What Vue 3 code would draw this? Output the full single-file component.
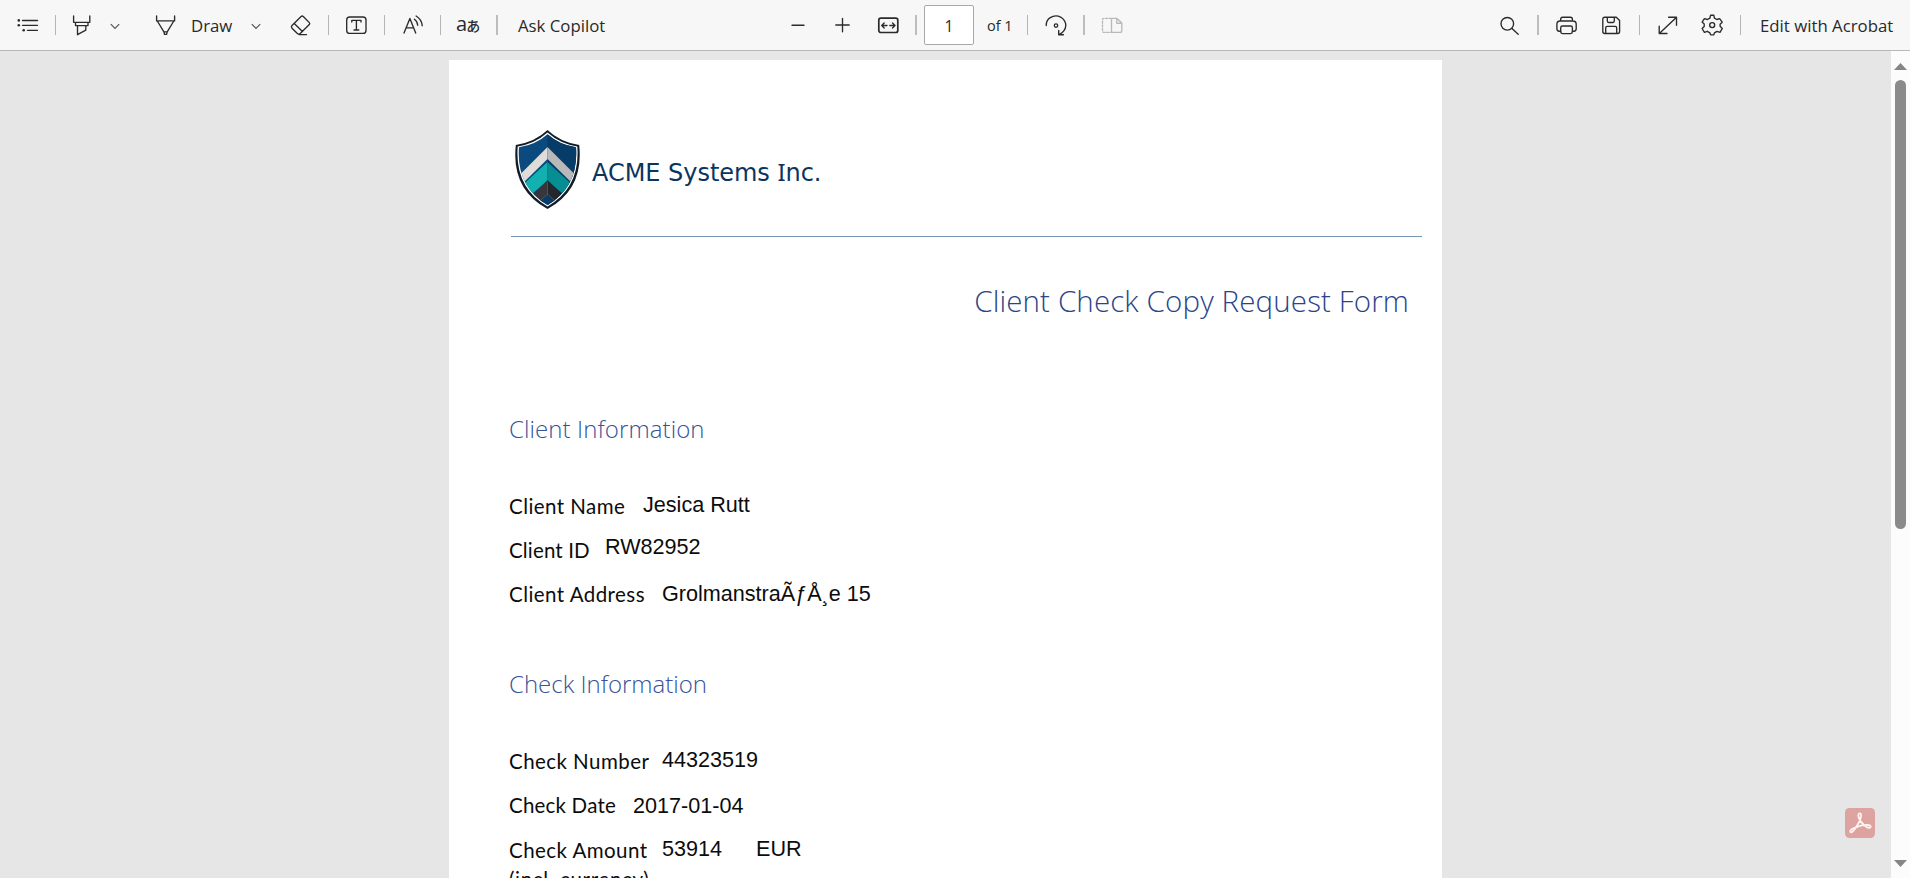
<script setup>
const clientRows = [
  { key: 'name', label: 'Client Name', value: 'Jesica Rutt' },
  { key: 'id', label: 'Client ID', value: 'RW82952' },
  { key: 'address', label: 'Client Address', value: 'GrolmanstraÃƒÅ¸e 15' },
]
const checkRows = [
  { key: 'number', label: 'Check Number', value: '44323519' },
  { key: 'date', label: 'Check Date', value: '2017-01-04' },
  { key: 'amount', label: 'Check Amount', value: '53914', extra: 'EUR' },
]
</script>

<template>
  <div class="viewer">
    <header class="toolbar">
      <svg class="icon" viewBox="0 0 24 24"><path d="M6.5 7.5H21.5M6.5 12.3H21.5M11.5 17.3H21.5" /><g class="solid"><circle cx="2.8" cy="7.4" r="1.3" /><circle cx="2.8" cy="12.2" r="1.3" /><circle cx="7.7" cy="17.2" r="1.3" /></g></svg>
      <i class="sep s1"></i>
      <svg class="icon i-high" viewBox="0 0 24 24"><path d="M3.6 3V9.3H19.8V3M5.5 9.5V12.6H18V9.5M7.5 12.8V21.7L15.8 17.2V12.8" /></svg>
      <svg class="chev c1" viewBox="0 0 12 12"><path d="M1.8 4.2L6 8.4L10.2 4.2" /></svg>
      <svg class="icon i-draw" viewBox="0 0 24 24"><path d="M3.6 3V7.9H21.6V3M4.3 8L10.9 18.8H14.2L20.8 8M10.9 18.8L11.5 21.4H13.6L14.2 18.8" /></svg>
      <span class="txt t-draw">Draw</span>
      <svg class="chev c2" viewBox="0 0 12 12"><path d="M1.8 4.2L6 8.4L10.2 4.2" /></svg>
      <svg class="icon i-erase" viewBox="0 0 24 24"><path d="M15.3 3.5L21.3 9.6Q22.2 10.6 21.3 11.6L12.5 20.3Q10.8 21.9 9.1 20.3L4 15.2Q2.7 13.8 4 12.5L13.1 3.5Q14.2 2.5 15.3 3.5ZM6.2 10.4L14.5 18.6M11 21.6H18.5" /></svg>
      <i class="sep s2"></i>
      <svg class="icon i-text" viewBox="0 0 24 24"><rect x="2.7" y="4" width="19.3" height="16.4" rx="3" /><path d="M7.8 9V7.3H17V9M12.4 7.3V17M10 17H14.8" /></svg>
      <i class="sep s3"></i>
      <svg class="icon i-read" viewBox="0 0 24 24"><path d="M3 20L8.9 5.5L14.7 20M5.2 14.8H12.6M13.4 6.2Q16.4 8.2 16.7 12.2M15.1 3Q20.6 6.2 21.2 12.7" /></svg>
      <i class="sep s4"></i>
      <span class="translate"><span class="latin">a</span><span class="kana">あ</span></span>
      <i class="sep wide s5"></i>
      <span class="txt t-ask">Ask Copilot</span>

      <svg class="icon i-minus" viewBox="0 0 24 24"><path d="M6 12.2H18" /></svg>
      <svg class="icon i-plus" viewBox="0 0 24 24"><path d="M12.5 5.3V18.7M5.8 12H19.2" /></svg>
      <svg class="icon i-fit" viewBox="0 0 24 24"><rect class="bold" x="2.8" y="5.2" width="19" height="14.3" rx="2" /><path d="M6 12.5H11M8.2 10L5.7 12.5L8.2 15M13.8 12.5H18.8M16.5 10L19 12.5L16.5 15" /></svg>
      <i class="sep wide s6"></i>
      <span class="page-input">1</span>
      <span class="txt t-of">of 1</span>
      <i class="sep s7"></i>
      <svg class="icon i-rotate" viewBox="0 0 24 24"><path d="M2.2 12.6Q2.1 7.1 6.3 4.6Q11.5 1.4 17 4.3Q22.2 7.6 21.7 13.4Q21.1 18.4 15.5 21.4M14.7 17.3V21.7H19.4" /><circle cx="12" cy="12.6" r="1.7" /></svg>
      <i class="sep wide s8"></i>
      <svg class="icon i-view faded" viewBox="0 0 24 24"><path d="M11.5 5.4H17L21.8 10V17.5Q21.8 19.4 20 19.4H11.5ZM16.8 5.4V10.2H21.8" /><path stroke-dasharray="2 1.5" d="M11 5.4H4.2Q2.5 5.4 2.5 7V17.7Q2.5 19.4 4.2 19.4H11" /></svg>

      <svg class="icon i-search" viewBox="0 0 24 24"><circle cx="10.3" cy="10.8" r="6.3" /><path d="M15 15.4L21.2 21.2" /></svg>
      <i class="sep wide s9"></i>
      <svg class="icon i-print" viewBox="0 0 24 24"><path d="M6.7 8V6.2Q6.7 4.2 8.7 4.2H16.4Q18.4 4.2 18.4 6.2V8M6.7 18.2H5.2Q2.9 18.2 2.9 15.8V11.3Q2.9 8 6 8H19Q22.2 8 22.2 11.3V15.8Q22.2 18.2 19.9 18.2H18.4" /><rect x="6.7" y="13" width="11.7" height="7.6" rx="1.8" /></svg>
      <svg class="icon i-save" viewBox="0 0 24 24"><path d="M5.7 4.2H17.3L20.6 7.5V18.6Q20.6 20.5 18.7 20.5H5.7Q3.8 20.5 3.8 18.6V6.1Q3.8 4.2 5.7 4.2ZM8.3 4.4V8.1Q8.3 9.5 9.6 9.5H14Q15.3 9.5 15.3 8.1V4.4M6.7 20.3V15Q6.7 13.4 8.2 13.4H16.2Q17.7 13.4 17.7 15V20.3" /></svg>
      <i class="sep s10"></i>
      <svg class="icon i-expand" viewBox="0 0 24 24"><path d="M3.3 20.4L20.3 4.4M12.6 4.2H20.5V12.2M3.2 13.2V20.5H11" /></svg>
      <svg class="icon i-gear" viewBox="0 0 24 24"><path d="M10.6 2.2H13.8L14.4 5.1L16.8 6.5L19.6 5.6L22.2 9.2L20.1 11.2V13.3L22.3 15.4L20 19.3L16.9 18.4L14.5 19.8L13.8 21.9H10.6L9.9 19.8L7.3 18.3L4.4 19.3L2.1 15.5L4.2 13.4V11L2.1 9.1L4.4 5.6L7.5 6.5L9.9 5.1Z" /><circle cx="12.2" cy="12.1" r="2.5" /></svg>
      <i class="sep s11"></i>
      <span class="txt t-edit">Edit with Acrobat</span>
    </header>

    <main class="canvas">
      <article class="page">
        <div class="brand">
          <svg class="logo" viewBox="0 0 65 80">
            <defs><clipPath id="shield"><path d="M32.5 4.2Q44 14.5 61 17.3Q64 56 32.5 75Q1 56 4 17.3Q21 14.5 32.5 4.2Z" /></clipPath></defs>
            <path fill="#111c26" d="M32.5 0Q45 12 64.2 15Q69 59 32.5 79Q-4 59 0.8 15Q20 12 32.5 0Z" />
            <path fill="#fff" d="M32.5 2.6Q45 13.8 62.3 16.5Q65.5 57.5 32.5 76.5Q-.5 57.5 2.7 16.5Q20 13.8 32.5 2.6Z" />
            <g clip-path="url(#shield)">
              <path fill="#0a4a7f" d="M0 0H65V80H0Z" /><path fill="#073b68" d="M32.5 0H65V80H32.5Z" />
              <path fill="#deddda" d="M32.5 17L0 49.5V61L32.5 29Z" /><path fill="#bab9b9" d="M32.5 17L65 49.5V61L32.5 29Z" />
              <path fill="#12b0af" d="M32.5 32L0 62V78L32.5 51Z" /><path fill="#078e93" d="M32.5 32L65 62V78L32.5 51Z" />
              <path fill="#37363c" d="M32.5 50L10 72L18 80L32.5 65Z" /><path fill="#25272d" d="M32.5 50L55 72L47 80L32.5 65Z" />
              <path fill="#073b68" d="M32.5 65L20 75L32.5 80L45 75Z" />
              <path stroke="#555b62" stroke-width=".8" fill="none" d="M32.5 52V65M26 70L32.5 64L39 70" />
            </g>
          </svg>
          <span class="company">ACME Systems <span class="cap-i">I</span>nc.</span>
        </div>
        <div class="rule"></div>
        <h1>Client Check Copy Request Form</h1>
        <section class="client">
          <h2 class="h-client">Client Information</h2>
          <div v-for="r in clientRows" :key="r.key" :class="['row', r.key]">
            <span class="label">{{ r.label }}</span><span class="value">{{ r.value }}</span>
          </div>
        </section>
        <section class="check">
          <h2 class="h-check">Check Information</h2>
          <div v-for="r in checkRows" :key="r.key" :class="['row', r.key]">
            <span class="label">{{ r.label }}</span><span class="value">{{ r.value }}</span><span v-if="r.extra" class="value extra">{{ r.extra }}</span>
          </div>
          <div class="row note"><span class="label">(incl. currency)</span></div>
        </section>
      </article>
      <svg class="acrobat" viewBox="0 0 30 30"><rect width="30" height="30" rx="4.5" fill="#dca3a0" /><path fill="none" stroke="#fff4f1" stroke-width="1.8" stroke-linejoin="round" d="M14.2 5.5Q16.3 4.6 16 8.4Q15.4 13 10.5 20Q7 25.5 5.3 23.8Q4.3 21.6 10.8 19.3Q18 16.6 23 17Q26.6 17.5 25.4 19.4Q23.7 21 19.7 17.5Q14.5 13 13.5 8.8Q13 6 14.2 5.5Z" /></svg>
      <aside class="scrollbar">
        <svg class="arrow" viewBox="0 0 13 7"><path d="M6.5 0L13 7H0Z" /></svg>
        <div class="thumb"></div>
        <svg class="arrow down" viewBox="0 0 13 7"><path d="M0 0H13L6.5 7Z" /></svg>
      </aside>
    </main>
  </div>
</template>

<style>
html, body { margin: 0; overflow: hidden; }
</style>

<style scoped>
.viewer { width: 1910px; height: 878px; overflow: hidden; display: flex; flex-direction: column; background: #e6e6e6; }
.toolbar { box-sizing: border-box; height: 51px; flex: none; display: flex; align-items: center; padding: 0 0 0 16px; background: #f7f7f7; border-bottom: 1px solid #b8b8b8; font-family: "Open Sans", "Noto Sans", sans-serif; color: #292929; }
.icon { width: 24px; height: 24px; flex: none; fill: none; stroke: #2b2b2b; stroke-width: 1.35; stroke-linejoin: round; stroke-linecap: round; }
.icon .solid { fill: #2b2b2b; stroke: none; }
.icon .bold { stroke-width: 1.7; }
.icon.faded { stroke: #b9b9b9; }
.chev { width: 12px; height: 12px; flex: none; fill: none; stroke: #555; stroke-width: 1.2; margin-top: 2px; }
.sep { width: 1px; height: 20px; flex: none; background: #b5b5b5; }
.sep.wide { width: 2px; background: #bdbdbd; }
.txt { flex: none; font-size: 16.8px; line-height: 24px; padding-top: 2px; white-space: nowrap; }
.s1 { margin-left: 15px; } .i-high { margin-left: 14px; } .c1 { margin-left: 15px; }
.i-draw { margin-left: 32px; } .t-draw { margin-left: 14px; width: 40px; } .c2 { margin-left: 19px; }
.i-erase { margin-left: 26px; } .s2 { margin-left: 16px; } .i-text { margin-left: 15px; }
.s3 { margin-left: 16px; } .i-read { margin-left: 16px; } .s4 { margin-left: 15px; }
.translate { display: flex; align-items: baseline; flex: none; width: 25px; margin: -1px 0 0 15px; line-height: 24px; }
.latin { font-size: 20px; }
.kana { margin-left: -1px; font: 500 14px/24px "Noto Sans CJK JP", sans-serif; }
.s5 { margin-left: 15px; } .t-ask { margin-left: 20px; width: 90px; }
.i-minus { margin-left: 178px; } .i-plus { margin-left: 20px; } .i-fit { margin-left: 22px; } .s6 { margin-left: 15px; }
.page-input { box-sizing: border-box; flex: none; width: 50px; height: 40px; margin-left: 7px; border: 1px solid #a8a8a8; border-radius: 2px; background: #fff; font-size: 15.5px; line-height: 40px; text-align: center; }
.t-of { margin-left: 13px; width: 26px; font-size: 14.5px; }
.s7 { margin-left: 14px; } .i-rotate { margin-left: 16px; } .s8 { margin-left: 15px; } .i-view { margin-left: 15px; }
.i-search { margin-left: 373px; } .s9 { margin-left: 16px; } .i-print { margin-left: 15px; } .i-save { margin-left: 21px; }
.s10 { margin-left: 16px; } .i-expand { margin-left: 16px; } .i-gear { margin-left: 20px; } .s11 { margin-left: 16px; }
.t-edit { margin-left: 19px; }

.canvas { flex: 1; min-height: 0; display: flex; position: relative; }
.page { box-sizing: border-box; width: 993px; height: 1200px; margin: 9px 0 0 449px; padding: 70px 20px 0 60px; background: #fff; font-variant-ligatures: none; }
.brand { display: flex; height: 80px; padding-left: 6px; }
.logo { width: 65px; height: 80px; }
.company { margin: 28px 0 0 12px; font: 24px/28px "DejaVu Sans", sans-serif; letter-spacing: -0.04px; color: #0b355f; white-space: nowrap; }
.cap-i { font-family: "Noto Sans", sans-serif; }
.rule { height: 1px; margin: 26px 0 0 2px; background: #7694b4; }
h1 { margin: 46px 13px 0 0; text-align: right; font: 300 29.5px/36px "Open Sans", sans-serif; letter-spacing: 0.13px; color: #2b4488; white-space: nowrap; }
h2 { margin: 0; font: 300 24px/28px "Open Sans", sans-serif; letter-spacing: 0.1px; color: #365399; white-space: nowrap; }
h2.h-check { letter-spacing: 0; }
.client { padding-top: 96px; }
.check { padding-top: 44px; }
.row { display: flex; align-items: flex-start; height: 44px; font-size: 20.5px; line-height: 24px; color: #0c0c0c; white-space: nowrap; }
h2 + .row { margin-top: 51px; }
.label { font-family: Lato, sans-serif; letter-spacing: 0.45px; flex: none; }
.value { font-family: "Liberation Sans", Arial, sans-serif; font-size: 21.6px; flex: none; }
.name .label { width: 134px; } .name .value { margin-top: -1px; }
.id .label { width: 96px; letter-spacing: 0.15px; } .id .value { margin-top: -3px; }
.address .label { width: 153px; }
.number .label { width: 153px; } .number .value { margin-top: -1px; }
.date .label { width: 124px; letter-spacing: 0.2px; } .date .value { margin-top: 1px; }
.date { height: 45px; }
.amount { height: 29px; } .amount .label { width: 153px; } .amount .value { width: 94px; margin-top: -1px; }
.note .label { letter-spacing: 0.65px; }
.acrobat { position: absolute; left: 1845px; top: 757px; width: 30px; height: 30px; }
.scrollbar { box-sizing: border-box; width: 19px; margin-left: auto; padding: 12px 3px 11px; display: flex; flex-direction: column; background: #fcfcfc; }
.arrow { width: 13px; height: 7px; flex: none; fill: #858585; }
.thumb { width: 11px; height: 449px; margin: 10px 0 0 1px; border-radius: 6px; background: #8b8b8b; }
.down { margin-top: auto; }
</style>
